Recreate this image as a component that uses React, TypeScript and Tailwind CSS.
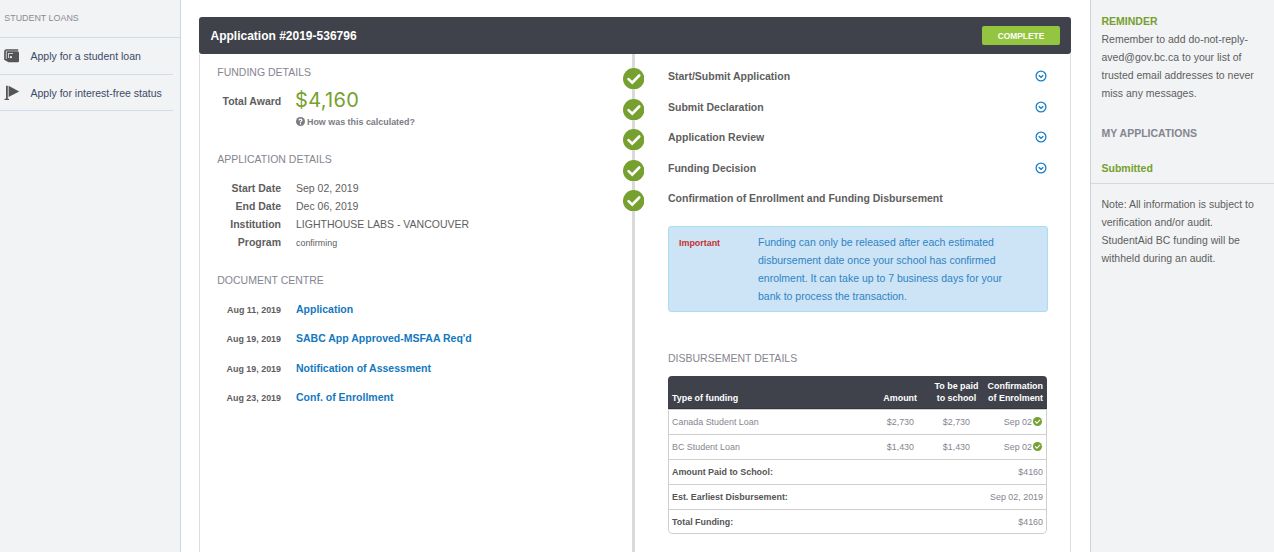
import React from "react";

const steps = [
  { label: "Start/Submit Application", row: "h-[31px]" },
  { label: "Submit Declaration", row: "h-[30px]" },
  { label: "Application Review", row: "h-[31px]" },
  { label: "Funding Decision", row: "h-[30px]" },
];

const details = [
  ["Start Date", "Sep 02, 2019"],
  ["End Date", "Dec 06, 2019"],
  ["Institution", "LIGHTHOUSE LABS - VANCOUVER"],
];

const documents = [
  { date: "Aug 11, 2019", name: "Application", row: "h-[29px]" },
  { date: "Aug 19, 2019", name: "SABC App Approved-MSFAA Req'd", row: "h-[30px]" },
  { date: "Aug 19, 2019", name: "Notification of Assessment", row: "h-[29px]" },
  { date: "Aug 23, 2019", name: "Conf. of Enrollment", row: "h-[29px]" },
];

const loans = [
  ["Canada Student Loan", "$2,730"],
  ["BC Student Loan", "$1,430"],
];

const totals = [
  ["Amount Paid to School:", "$4160"],
  ["Est. Earliest Disbursement:", "Sep 02, 2019"],
  ["Total Funding:", "$4160"],
];

function Check({ className }: { className: string }) {
  return (
    <svg viewBox="0 0 22 22" className={className}>
      <circle cx="11" cy="11" r="11" fill="#76a02f" />
      <path d="M5.7 11.4 9.5 15l7.2-7.3" fill="none" stroke="#fff" strokeWidth="2.7" strokeLinecap="round" />
    </svg>
  );
}

function ChevronCircle() {
  return (
    <svg viewBox="0 0 12 12" className="mt-[3px] h-3 w-3" fill="none" stroke="#1d7ec6">
      <circle cx="6" cy="6" r="4.9" strokeWidth="1.3" />
      <path d="M3.7 5.2 6 7.3l2.3-2.1" strokeWidth="1.4" />
    </svg>
  );
}

function Heading({ children }: { children: React.ReactNode }) {
  return <h2 className="text-[#85858f]">{children}</h2>;
}

export default function App() {
  return (
    <div className="flex h-[552px] w-[1274px] overflow-hidden bg-white font-['Liberation_Sans',Arial,sans-serif] text-[10.5px] leading-[18px] text-[#5e5e5e]">
      <aside className="w-[181px] shrink-0 border-r border-[#cdd6e1] bg-[#f1f3f5] text-[#3b4a66]">
        <div className="h-[38px] border-b border-[#d3dce9] pt-[9px] pl-[4.25px] text-[8.925px] text-[#8a8d93]">STUDENT LOANS</div>
        <a className="flex h-[37px] w-[173px] items-center border-b border-[#d3dce9] pl-1">
          <svg viewBox="0 0 16 14" className="h-[14px] w-4">
            <path d="M1 11V2.5Q1 1 2.5 1H14.2" fill="none" stroke="#555" strokeWidth="1.7" />
            <path
              fillRule="evenodd"
              d="M2.6 2.2H13.5Q15 2.2 15 4V12Q15 13.3 13.7 13.3H4.5L1 11.3V10H2.6ZM4.2 3.9V9H5V4.7H9V3.9ZM5.8 8.2a1.1 1.1 0 1 0 2.2 0a1.1 1.1 0 1 0-2.2 0Z"
              fill="#555"
            />
          </svg>
          <span className="ml-[10.5px]">Apply for a student loan</span>
        </a>
        <a className="flex h-9 w-[173px] items-center border-b border-[#d3dce9] pl-1">
          <svg viewBox="0 0 16 16" className="h-4 w-4" fill="#555">
            <path d="M2 .8h1.8v13H5V15H.5v-1.2H2zM4.6 .8l10.6 5.6L4.6 12z" />
          </svg>
          <span className="ml-[10.5px]">Apply for interest-free status</span>
        </a>
      </aside>

      <main className="flex-1 pt-[17px] pr-[19px] pl-[18px]">
        <header className="flex h-[37px] items-center justify-between rounded-[3px] bg-[#40424b] pr-[11px] pl-[11.5px]">
          <h1 className="text-[12px] font-bold text-white">Application #2019-536796</h1>
          <span className="flex h-[19px] w-[78px] items-center justify-center rounded-[2px] bg-[#93c541] text-[8.4px] font-bold text-white">COMPLETE</span>
        </header>
        <div className="flex h-[498px] border-x border-[#dcdde0]">
          <section className="w-[422px] pt-[9px] pl-[17.25px]">
            <Heading>FUNDING DETAILS</Heading>
            <div className="mt-[9px] flex">
              <div className="mt-[2px] w-16 text-right font-bold">Total Award</div>
              <div className="ml-[14.75px]">
                <div className="-ml-px h-[22px] font-['Inter',sans-serif] text-[20px] tracking-[0.3px] leading-[21px] text-[#76a02f]">$4,160</div>
                <div className="flex h-[18px] items-center pt-px text-[8.925px] font-bold text-[#7c7c85]">
                  <svg viewBox="0 0 10 10" className="mr-[2px] mb-px h-[9px] w-[9px]">
                    <circle cx="5" cy="5" r="5" fill="#7c7c85" />
                    <path d="M3.2 3.7Q3.5 2.4 5 2.4T6.7 3.7Q6.7 4.5 5 5.2V6M5 6.8v1.4" fill="none" stroke="#fff" strokeWidth="1.3" />
                  </svg>
                  How was this calculated?
                </div>
              </div>
            </div>
            <div className="mt-5">
              <Heading>APPLICATION DETAILS</Heading>
            </div>
            <div className="mt-[11px]">
              {details.map(([k, v]) => (
                <div key={k} className="flex">
                  <div className="w-[63.75px] text-right font-bold">{k}</div>
                  <div className="ml-[15px]">{v}</div>
                </div>
              ))}
              <div className="flex h-[18px]">
                <div className="w-[63.75px] text-right font-bold">Program</div>
                <div className="ml-[15px] pt-px text-[8.925px]">confirming</div>
              </div>
            </div>
            <div className="mt-5">
              <Heading>DOCUMENT CENTRE</Heading>
            </div>
            <div className="mt-[11px]">
              {documents.map((d) => (
                <div key={d.name} className={`flex ${d.row}`}>
                  <div className="w-[63.75px] pt-px text-right text-[8.925px] font-bold">{d.date}</div>
                  <a className="ml-[15px] font-bold text-[#1478be]">{d.name}</a>
                </div>
              ))}
            </div>
          </section>

          <section className="relative flex-1 pr-[22px]">
            <div className="absolute top-0 left-[10px] h-full w-[3px] bg-[#dadada]" />
            <div className="pt-[13px]">
              {steps.map((s) => (
                <div key={s.label} className={`relative flex items-start ${s.row}`}>
                  <Check className="mt-[1px] ml-[0.6px] h-[21.4px] w-[21.4px]" />
                  <span className="ml-6 flex-1 font-bold">{s.label}</span>
                  <span className="mr-[1px]"><ChevronCircle /></span>
                </div>
              ))}
              <div className="relative flex h-[37px] items-start">
                <Check className="mt-[1px] ml-[0.6px] h-[21.4px] w-[21.4px]" />
                <span className="ml-6 font-bold">Confirmation of Enrollment and Funding Disbursement</span>
              </div>
            </div>
            <div className="ml-[46px]">
              <div className="flex h-[86px] rounded-[3px] border border-[#a9dff1] bg-[#cce4f6] pt-[6px] pl-[10px]">
                <div className="w-[79px] pt-px text-[8.925px] font-bold text-[#c33030]">Important</div>
                <p className="text-[#2f83c4]">
                  Funding can only be released after each estimated<br />
                  disbursement date once your school has confirmed<br />
                  enrolment. It can take up to 7 business days for your<br />
                  bank to process the transaction.
                </p>
              </div>
              <div className="mt-[37px]">
                <Heading>DISBURSEMENT DETAILS</Heading>
              </div>
              <div className="mt-[9px] w-[379px] overflow-hidden rounded-[4px] text-[8.925px] leading-[12px] text-[#85858f]">
                <div className="flex h-[33px] items-end border-b border-[#34353c] bg-[#40424b] pr-1 pb-[4px] pl-1 font-bold text-white">
                  <div className="w-[200px]">Type of funding</div>
                  <div className="w-[45px] text-right">Amount</div>
                  <div className="ml-[17px] w-[45px] text-center whitespace-nowrap">To be paid<br />to school</div>
                  <div className="flex-1 text-right">Confirmation<br />of Enrolment</div>
                </div>
                <div className="rounded-b-[4px] border border-[#cfcfcf]">
                  {loans.map(([name, amount]) => (
                    <div key={name} className="flex h-[25px] items-center border-b border-[#cfcfcf] pr-[4px] pb-px pl-[3px]">
                      <div className="w-[200px]">{name}</div>
                      <div className="w-[42px] text-right">{amount}</div>
                      <div className="w-14 text-right">{amount}</div>
                      <div className="flex flex-1 items-center justify-end">
                        Sep 02<Check className="mb-[1px] ml-[1px] h-[9px] w-[9px]" />
                      </div>
                    </div>
                  ))}
                  {totals.map(([k, v]) => (
                    <div key={k} className="flex h-[25px] items-center justify-between border-b border-[#cfcfcf] pr-[3px] pb-px pl-[3px] last:h-[23px] last:border-b-0 last:pb-0">
                      <span className="font-bold text-[#555]">{k}</span>
                      <span>{v}</span>
                    </div>
                  ))}
                </div>
              </div>
            </div>
          </section>
        </div>
      </main>

      <aside className="w-[184px] shrink-0 border-l border-[#cdd3dd] bg-[#f1f3f5] pt-3">
        <div className="px-[10.5px]">
          <h3 className="font-bold text-[#76a02f]">REMINDER</h3>
          <p>Remember to add do-not-reply-<br />aved@gov.bc.ca to your list of<br />trusted email addresses to never<br />miss any messages.</p>
          <h3 className="mt-[22px] font-bold text-[#85858f]">MY APPLICATIONS</h3>
          <h3 className="mt-[17px] font-bold text-[#76a02f]">Submitted</h3>
        </div>
        <div className="mt-[6px] border-t border-[#d6d8db] px-[10.5px] pt-[11px]">
          Note: All information is subject to<br />verification and/or audit.<br />StudentAid BC funding will be<br />withheld during an audit.
        </div>
      </aside>
    </div>
  );
}
